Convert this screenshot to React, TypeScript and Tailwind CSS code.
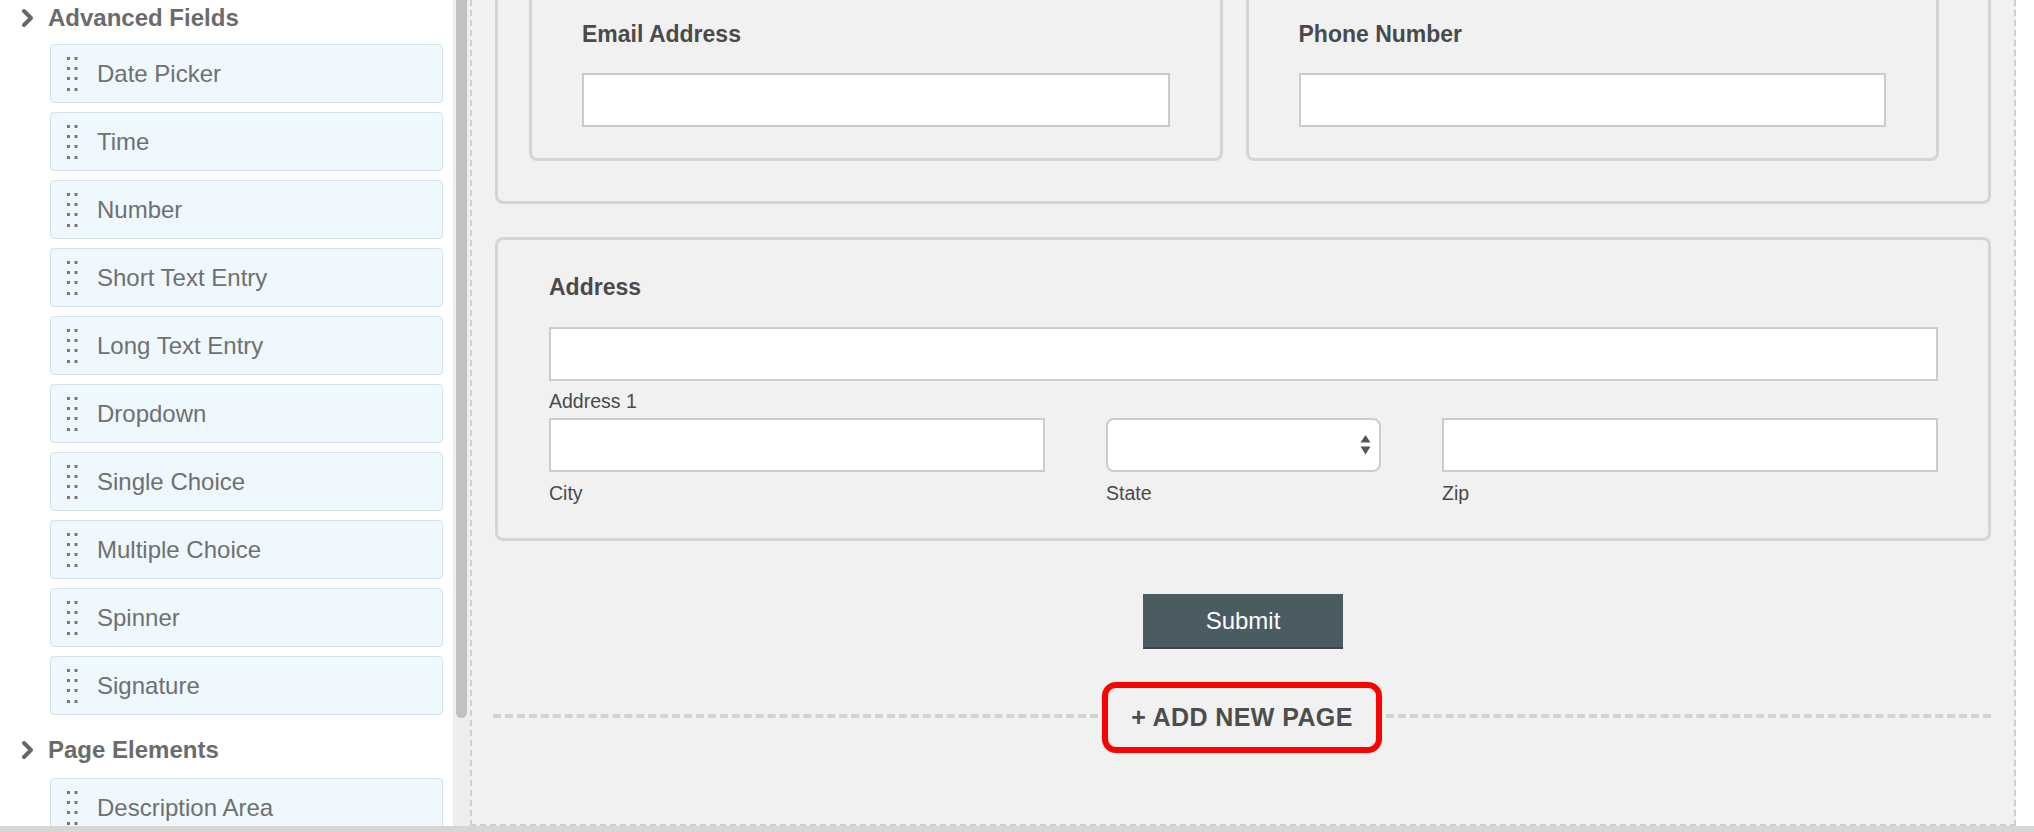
import React from "react";

const advanced = [
  "Date Picker",
  "Time",
  "Number",
  "Short Text Entry",
  "Long Text Entry",
  "Dropdown",
  "Single Choice",
  "Multiple Choice",
  "Spinner",
  "Signature",
];

function Grip() {
  return (
    <svg width="11" height="34" viewBox="0 0 11 34" className="shrink-0">
      {[0, 10, 20, 31].map((y) => (
        <g key={y}>
          <rect x="0" y={y} width="3" height="3" fill="#7a7a7a" />
          <rect x="7.5" y={y} width="3" height="3" fill="#7a7a7a" />
        </g>
      ))}
    </svg>
  );
}

function Chevron() {
  return (
    <svg width="13" height="20" viewBox="0 0 13 20" className="shrink-0">
      <polyline
        points="3,3 10,10 3,17"
        fill="none"
        stroke="#666666"
        strokeWidth="4"
        strokeLinecap="round"
        strokeLinejoin="round"
      />
    </svg>
  );
}

function Header({ label }: { label: string }) {
  return (
    <div className="flex items-center h-[36px] pl-[21px]">
      <Chevron />
      <span className="ml-[14px] text-[24px] font-bold text-[#6b6b6b] leading-none">{label}</span>
    </div>
  );
}

function Item({ label }: { label: string }) {
  return (
    <div className="flex items-center h-[59px] w-[393px] ml-[50px] border-[1.5px] border-[#d2e3ec] bg-[#eef8fd] rounded-[4px] pl-[16px]">
      <Grip />
      <span className="ml-[19px] text-[24px] text-[#707070] leading-none">{label}</span>
    </div>
  );
}

function TextInput({ className = "" }: { className?: string }) {
  return <div className={"h-[54px] border-2 border-[#cccccc] bg-white " + className} />;
}

export default function App() {
  return (
    <div className="w-[2034px] h-[832px] flex flex-col bg-white overflow-hidden font-['Liberation_Sans',Arial,sans-serif]">
      <div className="flex h-[826px]">
        {/* Sidebar */}
        <aside className="w-[453px] h-full overflow-hidden bg-white">
          <Header label="Advanced Fields" />
          <div className="mt-[8px] flex flex-col gap-[9px]">
            {advanced.map((a) => (
              <Item key={a} label={a} />
            ))}
          </div>
          <div className="mt-[17px]">
            <Header label="Page Elements" />
          </div>
          <div className="mt-[10px] flex flex-col gap-[9px]">
            <Item label="Description Area" />
          </div>
        </aside>

        {/* Scrollbar */}
        <div className="w-[17px] h-full bg-[#eeeeee] px-[3px]">
          <div className="h-[718px] bg-[#c1c1c1] rounded-b-full" />
        </div>

        {/* Canvas */}
        <main className="w-[1546px] h-full border-l-2 border-r-2 border-b-2 border-dashed border-[#d0d0d0] bg-[#f1f1f1] px-[23px] overflow-hidden flex flex-col">
          {/* Contact row card */}
          <div className="mt-[-55px] border-[3px] border-[#d5d5d5] rounded-[8px] pt-[30px] pb-[40px] pl-[31px] pr-[49px] flex gap-[23px]">
            <div className="flex-1 border-[3px] border-[#d5d5d5] rounded-[8px] pt-[40px] pb-[31px] px-[50px]">
              <div className="text-[23px] font-bold text-[#4a4a4a] leading-[27px] mb-[25px]">Email Address</div>
              <TextInput />
            </div>
            <div className="flex-1 border-[3px] border-[#d5d5d5] rounded-[8px] pt-[40px] pb-[31px] px-[50px]">
              <div className="text-[23px] font-bold text-[#4a4a4a] leading-[27px] mb-[25px]">Phone Number</div>
              <TextInput />
            </div>
          </div>

          {/* Address card */}
          <div className="mt-[33px] border-[3px] border-[#d5d5d5] rounded-[8px] pt-[34px] pb-[34px] pl-[51px] pr-[50px]">
            <div className="text-[23px] font-bold text-[#4a4a4a] leading-[27px] mb-[26px]">Address</div>
            <TextInput />
            <div className="mt-[9px] text-[19.5px] text-[#4a4a4a] leading-[22px]">Address 1</div>
            <div className="mt-[6px] flex gap-[61px]">
              <div className="flex-1">
                <TextInput />
                <div className="mt-[10px] text-[19.5px] text-[#4a4a4a] leading-[22px]">City</div>
              </div>
              <div className="w-[275px]">
                <div className="h-[54px] border-2 border-[#cccccc] bg-white rounded-[8px] flex items-center justify-end pr-[8px]">
                  <svg width="11" height="20" viewBox="0 0 11 20">
                    <polygon points="0.5,7.5 5.5,0 10.5,7.5" fill="#555555" />
                    <polygon points="0.5,11.5 10.5,11.5 5.5,19.5" fill="#555555" />
                  </svg>
                </div>
                <div className="mt-[10px] text-[19.5px] text-[#4a4a4a] leading-[22px]">State</div>
              </div>
              <div className="flex-1">
                <TextInput />
                <div className="mt-[10px] text-[19.5px] text-[#4a4a4a] leading-[22px]">Zip</div>
              </div>
            </div>
          </div>

          {/* Submit */}
          <div className="mt-[53px] flex justify-center">
            <button className="w-[200px] h-[55px] bg-[#4b5b62] border-b-2 border-[#3b474d] text-white text-[24px] leading-none">
              Submit
            </button>
          </div>

          {/* Add new page */}
          <div className="mt-[33px] flex items-center">
            <div className="flex-1 border-t-4 border-dashed border-[#d3d3d3] mb-[4px] ml-[-2px]" />
            <div className="mx-[4px] w-[280px] h-[71px] border-[6px] border-[#ff0000] rounded-[14px] bg-[#f1f1f1] flex items-center justify-center">
              <span className="text-[25px] font-bold text-[#4d4d4d] tracking-[0.4px] leading-none">+ ADD NEW PAGE</span>
            </div>
            <div className="flex-1 border-t-4 border-dashed border-[#d3d3d3] mb-[4px]" />
          </div>
        </main>

        <div className="flex-1 bg-white" />
      </div>
      <div className="h-[6px] bg-[#d6d6d6]" />
    </div>
  );
}
